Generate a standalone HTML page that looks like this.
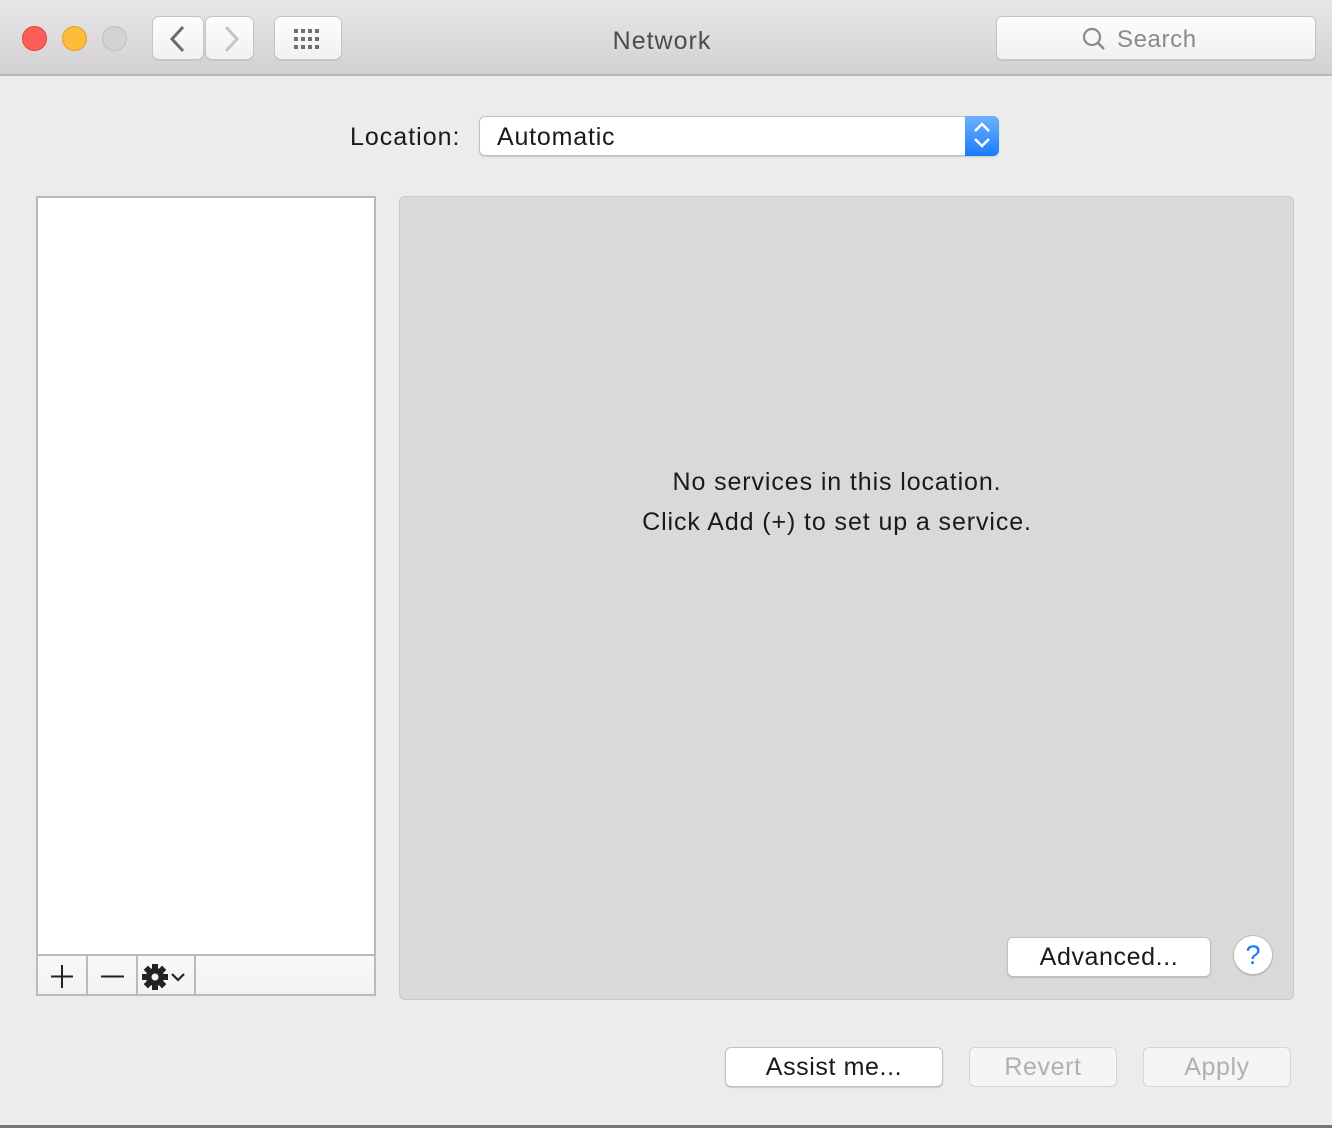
<!DOCTYPE html>
<html><head><meta charset="utf-8"><style>
*{box-sizing:border-box;margin:0;padding:0}
body{width:1332px;height:1128px;background:#ececec;font-family:"Liberation Sans",sans-serif;position:relative;overflow:hidden}
.tb{position:absolute;left:0;top:0;width:1332px;height:76px;background:linear-gradient(#e8e6e8,#d3d1d3);border-bottom:2px solid #b9b9b9}
.dot{position:absolute;top:26px;width:25px;height:25px;border-radius:50%}
.btn{position:absolute;background:linear-gradient(#fdfdfd,#f1f1f1);border:1px solid #c4c4c4;border-radius:7px;box-shadow:0 1px 1px rgba(0,0,0,.08)}
.abs{position:absolute}
.pb{position:absolute;background:#fff;border:1px solid #c0c0c0;border-radius:6px;box-shadow:0 1px 1px rgba(0,0,0,.15);font-size:25px;text-align:center;color:#1a1a1a;letter-spacing:0.6px}
.dis{background:#f5f5f5;color:#b0b0b0;border-color:#d6d6d6;box-shadow:none}
</style></head><body>
<div class="tb">
<div class="dot" style="left:22px;background:#fd5d57;border:1px solid #e0443e"></div>
<div class="dot" style="left:62px;background:#fdbd3a;border:1px solid #dea027"></div>
<div class="dot" style="left:102px;background:#d3d3d3;border:1px solid #bdbdbd"></div>
<div class="btn" style="left:152px;top:16px;width:52px;height:44px"><svg width="52" height="44" class="abs" style="left:0;top:0"><path d="M30 10 L19 22 L30 34" stroke="#6c6c6c" stroke-width="3" fill="none"/></svg></div>
<div class="btn" style="left:205px;top:16px;width:49px;height:44px"><svg width="49" height="44" class="abs" style="left:0;top:0"><path d="M20 10 L31 22 L20 34" stroke="#c4c4c4" stroke-width="3" fill="none"/></svg></div>
<div class="btn" style="left:274px;top:16px;width:68px;height:44px"><svg width="68" height="44" class="abs" style="left:0;top:0" fill="#707070">
<rect x="19" y="12" width="4" height="4"/><rect x="26" y="12" width="4" height="4"/><rect x="33" y="12" width="4" height="4"/><rect x="40" y="12" width="4" height="4"/>
<rect x="19" y="20" width="4" height="4"/><rect x="26" y="20" width="4" height="4"/><rect x="33" y="20" width="4" height="4"/><rect x="40" y="20" width="4" height="4"/>
<rect x="19" y="28" width="4" height="4"/><rect x="26" y="28" width="4" height="4"/><rect x="33" y="28" width="4" height="4"/><rect x="40" y="28" width="4" height="4"/></svg></div>
<div class="abs" style="left:-4px;width:1332px;top:27px;text-align:center;font-size:25px;color:#4d4d4d;letter-spacing:1px">Network</div>
<div class="btn" style="left:996px;top:16px;width:320px;height:44px;border-radius:6px"><svg width="26" height="26" class="abs" style="left:84px;top:9px"><circle cx="11" cy="11" r="8" stroke="#8a8a8a" stroke-width="2.2" fill="none"/><path d="M17 17 L23 23" stroke="#8a8a8a" stroke-width="2.5"/></svg><span class="abs" style="left:120px;top:9px;font-size:24px;color:#8a8a8a;letter-spacing:0.6px">Search</span></div>
</div>
<div class="abs" style="left:350px;top:123px;font-size:25px;color:#1a1a1a;letter-spacing:1px">Location:</div>
<div class="abs" style="left:479px;top:116px;width:520px;height:40px;background:#fff;border:1px solid #c2c2c2;border-radius:6px;box-shadow:0 1px 1px rgba(0,0,0,.15)"><span class="abs" style="left:17px;top:6px;font-size:25px;color:#1a1a1a;letter-spacing:0.8px">Automatic</span>
<div class="abs" style="right:-1px;top:-1px;width:34px;height:40px;border-radius:0 6px 6px 0;background:linear-gradient(#6fb0fd,#1a7cfb)"><svg width="34" height="40"><path d="M10 15 L17 8 L24 15 M10 23 L17 30 L24 23" stroke="#fff" stroke-width="2.5" fill="none"/></svg></div></div>
<div class="abs" style="left:36px;top:196px;width:340px;height:800px;background:#fff;border:2px solid #bababa"></div>
<div class="abs" style="left:38px;top:954px;width:336px;height:40px;background:linear-gradient(#f9f9f9,#f2f2f2);border-top:2px solid #bababa">
<div class="abs" style="left:48px;top:0;width:2px;height:40px;background:#bababa"></div>
<div class="abs" style="left:98px;top:0;width:2px;height:40px;background:#bababa"></div>
<div class="abs" style="left:156px;top:0;width:2px;height:40px;background:#bababa"></div>
<svg class="abs" style="left:0;top:0" width="160" height="40"><path d="M24 9 V32 M13 20.5 H35 M63 20.5 H86" stroke="#222" stroke-width="2"/>
<g transform="translate(117 21)" fill="#222"><circle r="9"/><rect x="-3" y="-13" width="6" height="26"/><rect x="-3" y="-13" width="6" height="26" transform="rotate(45)"/><rect x="-3" y="-13" width="6" height="26" transform="rotate(90)"/><rect x="-3" y="-13" width="6" height="26" transform="rotate(135)"/><circle r="3.5" fill="#f5f5f5"/></g>
<path d="M134 18 L140 24 L146 18" stroke="#222" stroke-width="2.2" fill="none"/></svg></div>
<div class="abs" style="left:399px;top:196px;width:895px;height:804px;background:#d9d9d9;border:1px solid #c9c9c9;border-radius:6px"></div>
<div class="abs" style="left:399px;top:462px;width:876px;text-align:center;font-size:25px;line-height:40px;color:#1a1a1a;letter-spacing:0.9px">No services in this location.<br>Click Add (+) to set up a service.</div>
<div class="pb" style="left:1007px;top:937px;width:204px;height:40px;line-height:38px">Advanced...</div>
<div class="abs" style="left:1233px;top:935px;width:40px;height:40px;border-radius:50%;background:#fff;border:1px solid #bdbdbd;box-shadow:0 1px 1px rgba(0,0,0,.15);text-align:center;font-size:27px;line-height:38px;color:#1a7cfb">?</div>
<div class="pb" style="left:725px;top:1047px;width:218px;height:40px;line-height:38px">Assist me...</div>
<div class="pb dis" style="left:969px;top:1047px;width:148px;height:40px;line-height:38px">Revert</div>
<div class="pb dis" style="left:1143px;top:1047px;width:148px;height:40px;line-height:38px">Apply</div>
<div class="abs" style="left:0;top:1125px;width:1332px;height:3px;background:#777"></div>
</body></html>
